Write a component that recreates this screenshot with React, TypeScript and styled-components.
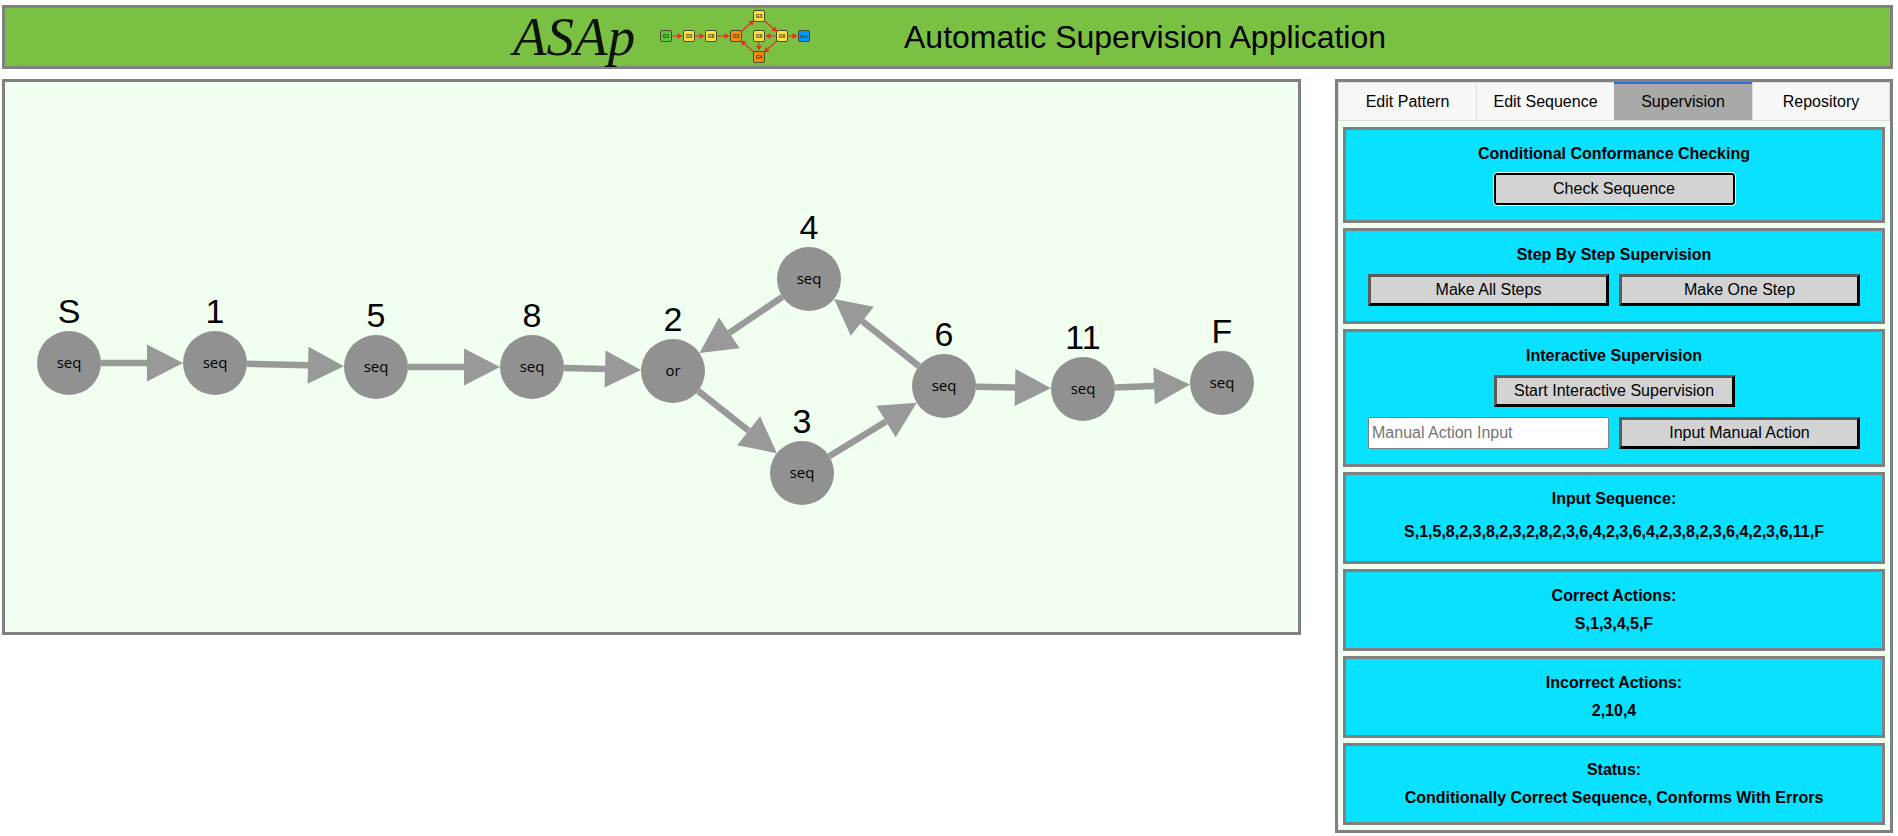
import React from "react";
import styled, { createGlobalStyle } from "styled-components";

const Global = createGlobalStyle`
  html, body { margin: 0; padding: 0; background: #fff; }
  body { font-family: "Liberation Sans", Arial, sans-serif; color: #000; overflow: hidden; }
`;

const Page = styled.div`
  display: flex;
  flex-direction: column;
  gap: 10px;
  padding: 5px 5px 0 2px;
`;

const Header = styled.header`
  box-sizing: border-box;
  height: 64px;
  border: 3px solid #808080;
  background: #7ac143;
  display: flex;
  align-items: center;
  padding-left: 508px;
`;

const Brand = styled.span`
  font-family: "Liberation Serif", serif;
  font-style: italic;
  font-size: 55px;
  line-height: 58px;
  width: 142px;
  color: #0c140a;
`;

const PatternLogo = styled.svg`
  width: 160px;
  height: 58px;
  display: block;
  flex: none;
`;

const AppTitle = styled.h1`
  margin: 0 0 0 89px;
  font-size: 32px;
  font-weight: 400;
  line-height: 40px;
  white-space: nowrap;
`;

const Main = styled.main`
  display: flex;
  align-items: flex-start;
  gap: 34px;
`;

const Canvas = styled.section`
  box-sizing: border-box;
  width: 1299px;
  height: 556px;
  flex: none;
  border: 3px solid #808080;
  background: #f0fff0;
`;

const GraphSvg = styled.svg`
  display: block;
  width: 1293px;
  height: 550px;
`;

const Panel = styled.aside`
  box-sizing: border-box;
  width: 558px;
  height: 754px;
  flex: none;
  border: 3px solid #808080;
  background: #f0fff0;
`;

const Tabs = styled.nav`
  display: grid;
  grid-template-columns: repeat(4, 138px);
  height: 39px;
`;

const Tab = styled.div<{ $active?: boolean }>`
  box-sizing: border-box;
  display: flex;
  align-items: center;
  justify-content: center;
  font-size: 16px;
  background: ${(p) => (p.$active ? "#a9a9a9" : "#f8f8f8")};
  border-top: ${(p) => (p.$active ? "2px solid #2a6fe0" : "1px solid #ddd")};
  border-bottom: 1px solid #ddd;
  border-left: ${(p) => (p.$active ? "0" : "1px solid #ddd")};
  &:last-child { border-right: 1px solid #ddd; }
`;

const Stack = styled.div`
  display: flex;
  flex-direction: column;
  gap: 5px;
  padding: 6px 5px 0;
`;

const Card = styled.div<{ $height: number }>`
  box-sizing: border-box;
  height: ${(p) => p.$height}px;
  border: 3px solid #808080;
  background: #08e1ff;
  padding: 14px 22px 0;
  display: flex;
  flex-direction: column;
  align-items: center;
  gap: 10px;
`;

const CardTitle = styled.div<{ $after?: number }>`
  font-size: 16px;
  font-weight: 700;
  line-height: 18px;
  padding-top: 1px;
  margin-bottom: ${(p) => p.$after ?? 0}px;
`;

const CardValue = styled.div`
  font-size: 16px;
  font-weight: 700;
  line-height: 18px;
`;

const Row = styled.div`
  display: grid;
  grid-template-columns: 241px 241px;
  gap: 10px;
`;

const ActionButton = styled.button<{ $focused?: boolean }>`
  box-sizing: border-box;
  width: 241px;
  height: 32px;
  padding: 0 0 1px;
  background: #d3d3d3;
  color: #000;
  font-family: "Liberation Sans", Arial, sans-serif;
  font-size: 16px;
  border-style: solid;
  border-width: ${(p) => (p.$focused ? "2px" : "3px")};
  border-color: ${(p) => (p.$focused ? "#000" : "#5c5c5c #000 #000 #5c5c5c")};
  border-radius: ${(p) => (p.$focused ? "3px" : "0")};
  outline: ${(p) => (p.$focused ? "1px solid #fff" : "none")};
`;

const ManualInput = styled.input`
  box-sizing: border-box;
  width: 241px;
  height: 32px;
  padding: 0 3px 1px;
  background: #fff;
  border: 1px solid #808080;
  border-radius: 2px;
  font-family: "Liberation Sans", Arial, sans-serif;
  font-size: 16px;
  &::placeholder { color: #757575; opacity: 1; }
`;

type Node = { id: string; kind: string; x: number; y: number };
const nodes: Node[] = [
  { id: "S", kind: "seq", x: 69, y: 363 },
  { id: "1", kind: "seq", x: 215, y: 363 },
  { id: "5", kind: "seq", x: 376, y: 367 },
  { id: "8", kind: "seq", x: 532, y: 367 },
  { id: "2", kind: "or", x: 673, y: 371 },
  { id: "4", kind: "seq", x: 809, y: 279 },
  { id: "6", kind: "seq", x: 944, y: 386 },
  { id: "3", kind: "seq", x: 802, y: 473 },
  { id: "11", kind: "seq", x: 1083, y: 389 },
  { id: "F", kind: "seq", x: 1222, y: 383 },
];
const edges = [
  ["S", "1"], ["1", "5"], ["5", "8"], ["8", "2"], ["2", "3"],
  ["3", "6"], ["6", "4"], ["4", "2"], ["6", "11"], ["11", "F"],
];
const R = 32;
const at = (id: string) => nodes.find((n) => n.id === id)!;

function Edge({ from, to }: { from: string; to: string }) {
  const a = at(from);
  const b = at(to);
  const len = Math.hypot(b.x - a.x, b.y - a.y);
  const ux = (b.x - a.x) / len;
  const uy = (b.y - a.y) / len;
  const sx = a.x + ux * R;
  const sy = a.y + uy * R;
  const tx = b.x - ux * R;
  const ty = b.y - uy * R;
  const bx = tx - ux * 36;
  const by = ty - uy * 36;
  const hw = 18.5;
  return (
    <g fill="#999" stroke="#999">
      <line x1={sx} y1={sy} x2={bx} y2={by} strokeWidth={6.5} />
      <polygon points={`${tx},${ty} ${bx - uy * hw},${by + ux * hw} ${bx + uy * hw},${by - ux * hw}`} stroke="none" />
    </g>
  );
}

type Mini = { t: string; x: number; y: number; c: string };
const mini: Mini[] = [
  { t: "G1", x: 666, y: 36, c: "#5ec83c" },
  { t: "G5", x: 689, y: 36, c: "#ffe13c" },
  { t: "G8", x: 711, y: 36, c: "#ffe13c" },
  { t: "G2", x: 736, y: 36, c: "#ff8c00" },
  { t: "G3", x: 759, y: 16, c: "#ffe13c" },
  { t: "G9", x: 759, y: 36, c: "#ffe13c" },
  { t: "G6", x: 782, y: 36, c: "#ffe13c" },
  { t: "G4", x: 759, y: 57, c: "#ff8c00" },
  { t: "G11", x: 804, y: 36, c: "#0096ff" },
];
const miniEdges = [
  ["G1", "G5"], ["G5", "G8"], ["G8", "G2"], ["G2", "G3"], ["G3", "G6"],
  ["G6", "G9"], ["G9", "G4"], ["G6", "G4"], ["G4", "G2"], ["G6", "G11"],
];
const miniAt = (t: string) => mini.find((m) => m.t === t)!;

function MiniEdge({ from, to }: { from: string; to: string }) {
  const a = miniAt(from);
  const b = miniAt(to);
  const len = Math.hypot(b.x - a.x, b.y - a.y);
  const ux = (b.x - a.x) / len;
  const uy = (b.y - a.y) / len;
  const off = 6.5;
  const tx = b.x - ux * off;
  const ty = b.y - uy * off;
  const bx = tx - ux * 5;
  const by = ty - uy * 5;
  return (
    <g fill="#ee2a1e" stroke="#ee2a1e">
      <line x1={a.x + ux * off} y1={a.y + uy * off} x2={bx} y2={by} strokeWidth={1.2} />
      <polygon points={`${tx},${ty} ${bx - uy * 3},${by + ux * 3} ${bx + uy * 3},${by - ux * 3}`} stroke="none" />
    </g>
  );
}

export default function App() {
  return (
    <>
      <Global />
      <Page>
        <Header>
          <Brand>ASAp</Brand>
          <PatternLogo viewBox="655 8 160 58">
            {miniEdges.map(([f, t]) => (
              <MiniEdge key={f + t} from={f} to={t} />
            ))}
            {mini.map((m) => (
              <g key={m.t}>
                <rect x={m.x - 5.5} y={m.y - 5.5} width={11} height={11} rx={1.5} fill={m.c} stroke="#4a4a2a" strokeWidth={1} />
                <text x={m.x} y={m.y + 1.8} textAnchor="middle" fontSize={m.t === "G11" ? 4.4 : 5} fontWeight={700} fontFamily="Liberation Sans, sans-serif" fill="#333">
                  {m.t}
                </text>
              </g>
            ))}
          </PatternLogo>
          <AppTitle>Automatic Supervision Application</AppTitle>
        </Header>
        <Main>
          <Canvas>
            <GraphSvg viewBox="5 82 1293 550">
              {edges.map(([f, t]) => (
                <Edge key={f + t} from={f} to={t} />
              ))}
              {nodes.map((n) => (
                <g key={n.id}>
                  <circle cx={n.x} cy={n.y} r={R} fill="#919191" />
                  <text x={n.x} y={n.y - 40} textAnchor="middle" fontSize={34} fontFamily="Liberation Sans, sans-serif" fill="#000">
                    {n.id}
                  </text>
                  <text x={n.x} y={n.y + 4.5} textAnchor="middle" fontSize={15} fontFamily="Open Sans, sans-serif" fill="#000">
                    {n.kind}
                  </text>
                </g>
              ))}
            </GraphSvg>
          </Canvas>
          <Panel>
            <Tabs>
              <Tab>Edit Pattern</Tab>
              <Tab>Edit Sequence</Tab>
              <Tab $active>Supervision</Tab>
              <Tab>Repository</Tab>
            </Tabs>
            <Stack>
              <Card $height={96}>
                <CardTitle>Conditional Conformance Checking</CardTitle>
                <ActionButton $focused>Check Sequence</ActionButton>
              </Card>
              <Card $height={96}>
                <CardTitle>Step By Step Supervision</CardTitle>
                <Row>
                  <ActionButton>Make All Steps</ActionButton>
                  <ActionButton>Make One Step</ActionButton>
                </Row>
              </Card>
              <Card $height={138}>
                <CardTitle>Interactive Supervision</CardTitle>
                <ActionButton>Start Interactive Supervision</ActionButton>
                <Row>
                  <ManualInput placeholder="Manual Action Input" />
                  <ActionButton>Input Manual Action</ActionButton>
                </Row>
              </Card>
              <Card $height={92}>
                <CardTitle $after={5}>Input Sequence:</CardTitle>
                <CardValue>S,1,5,8,2,3,8,2,3,2,8,2,3,6,4,2,3,6,4,2,3,8,2,3,6,4,2,3,6,11,F</CardValue>
              </Card>
              <Card $height={82}>
                <CardTitle>Correct Actions:</CardTitle>
                <CardValue>S,1,3,4,5,F</CardValue>
              </Card>
              <Card $height={82}>
                <CardTitle>Incorrect Actions:</CardTitle>
                <CardValue>2,10,4</CardValue>
              </Card>
              <Card $height={82}>
                <CardTitle>Status:</CardTitle>
                <CardValue>Conditionally Correct Sequence, Conforms With Errors</CardValue>
              </Card>
            </Stack>
          </Panel>
        </Main>
      </Page>
    </>
  );
}
